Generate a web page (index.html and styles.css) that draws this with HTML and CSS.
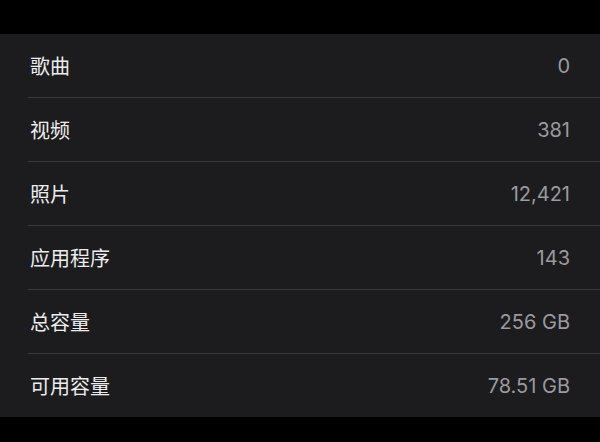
FILE: index.html
```html
<!DOCTYPE html>
<html lang="zh-CN">
  <head>
    <meta charset="UTF-8" />
    <meta name="viewport" content="width=device-width, initial-scale=1.0" />
    <title>关于本机</title>
    <link rel="stylesheet" href="styles.css">
  </head>
  <body>
    <div class="list">
      <div class="row"><span class="label">歌曲</span><span class="value">0</span></div>
      <div class="row"><span class="label">视频</span><span class="value">381</span></div>
      <div class="row"><span class="label">照片</span><span class="value">12,421</span></div>
      <div class="row"><span class="label">应用程序</span><span class="value">143</span></div>
      <div class="row"><span class="label">总容量</span><span class="value">256 GB</span></div>
      <div class="row"><span class="label">可用容量</span><span class="value">78.51 GB</span></div>
    </div>
  </body>
</html>
```

FILE: styles.css
```css
body {
  margin: 0;
  background-color: #000;
  font-family: Inter, "Noto Sans CJK SC", sans-serif;
  padding-top: 34px;
  height: 100vh;
  box-sizing: border-box;
}
.list {
  background: #1c1c1e;
  padding-left: 28px;
}
.row {
  display: flex;
  align-items: center;
  justify-content: space-between;
  height: 63px;
  padding-left: 2px;
  padding-right: 30px;
  border-top: 1px solid #38383a;
}
.row:first-child {
  border-top: none;
}
.label {
  color: #ececee;
  font-size: 20px;
}
.value {
  color: #9a9a9f;
  font-size: 20px;
}
```
